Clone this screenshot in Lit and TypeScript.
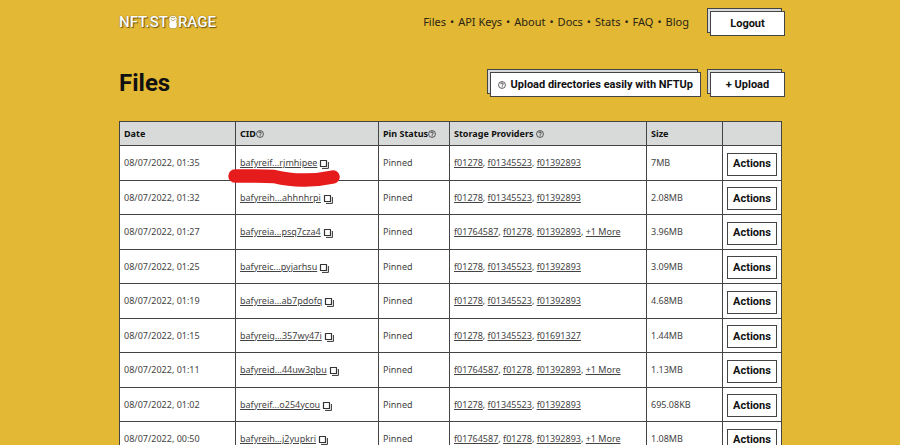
import { LitElement, html, css } from "lit";
import { customElement } from "lit/decorators.js";

interface FileRow {
  date: string;
  cid: string;
  providers: string[];
  more?: boolean;
  size: string;
  marked?: boolean;
}

const THREE = ["f01278", "f01345523", "f01392893"];
const MANY = ["f01764587", "f01278", "f01392893"];

const FILES: FileRow[] = [
  { date: "08/07/2022, 01:35", cid: "bafyreif...rjmhipee", providers: THREE, size: "7MB", marked: true },
  { date: "08/07/2022, 01:32", cid: "bafyreih...ahhnhrpi", providers: THREE, size: "2.08MB" },
  { date: "08/07/2022, 01:27", cid: "bafyreia...psq7cza4", providers: MANY, more: true, size: "3.96MB" },
  { date: "08/07/2022, 01:25", cid: "bafyreic...pyjarhsu", providers: THREE, size: "3.09MB" },
  { date: "08/07/2022, 01:19", cid: "bafyreia...ab7pdofq", providers: THREE, size: "4.68MB" },
  { date: "08/07/2022, 01:15", cid: "bafyreig...357wy47i", providers: ["f01278", "f01345523", "f01691327"], size: "1.44MB" },
  { date: "08/07/2022, 01:11", cid: "bafyreid...44uw3qbu", providers: MANY, more: true, size: "1.13MB" },
  { date: "08/07/2022, 01:02", cid: "bafyreif...o254ycou", providers: THREE, size: "695.08KB" },
  { date: "08/07/2022, 00:50", cid: "bafyreih...j2yupkri", providers: MANY, more: true, size: "1.08MB" },
];

const NAV = ["Files", "API Keys", "About", "Docs", "Stats", "FAQ", "Blog"];

const helpIcon = html`<svg class="help" viewBox="0 0 16 16" aria-hidden="true">
  <circle cx="8" cy="8" r="6.9" fill="none" stroke="currentColor" stroke-width="1.3"/>
  <path d="M5.4 6.2C5.5 4.6 6.6 3.9 8 3.9s2.6.8 2.6 2.2C10.6 7.7 8.3 7.7 8.3 9.6" fill="none" stroke="currentColor" stroke-width="1.5"/>
  <rect x="7.4" y="10.8" width="1.7" height="1.7" fill="currentColor"/>
</svg>`;

const copyIcon = html`<svg class="copy" viewBox="0 0 10 10" aria-hidden="true">
  <path d="M1.500 1.500h6v6h-6z" fill="none" stroke="#333" stroke-width="1.2" stroke-linejoin="round"/>
  <path d="M9.400 3v6.400H3" fill="none" stroke="#333" stroke-width="1"/>
</svg>`;

@customElement("app-root")
export class AppRoot extends LitElement {
  static styles = css`
    :host {
      display: block;
      box-sizing: border-box;
      min-height: 100vh;
      padding: 0 118px 0 119px;
      background: #e2b835;
      color: #111;
      font-family: "Noto Sans", "Open Sans", sans-serif;
      font-size: 9px;
      line-height: 12px;
    }
    a { color: inherit; }
    header {
      display: flex;
      align-items: center;
      justify-content: space-between;
      padding-top: 8px;
    }
    .logo {
      display: flex;
      align-items: center;
      color: #fff;
      font: 500 15px/20px Roboto, sans-serif;
      text-decoration: none;
      text-shadow: 1px 1px 1px #6b5410, 0 0 1px #6b5410;
    }
    .barrel { width: 10px; height: 14px; }
    .right { display: flex; align-items: center; gap: 18px; }
    .nav {
      display: flex;
      margin: 0;
      padding: 0;
      list-style: none;
      font-size: 11px;
      line-height: 16px;
      color: #2b2413;
    }
    .nav a { text-decoration: none; }
    .nav li + li::before { content: "•"; margin: 0 4px; }
    button {
      box-sizing: border-box;
      margin: 0;
      border: 1px solid #444;
      border-radius: 0;
      background: #fff;
      color: #111;
      font: 700 11px/14px Roboto, sans-serif;
    }
    .stacked {
      display: flex;
      align-items: center;
      justify-content: center;
      gap: 5px;
      min-width: 75px;
      height: 25px;
      padding: 0 7px;
      margin: 3px -3px 0 3px;
      box-shadow: -3px -3px 0 -1px #d8dad9, -3px -3px 0 0 #444;
    }
    .titlebar {
      display: flex;
      align-items: center;
      justify-content: space-between;
      margin: 33px 0 24px;
    }
    h1 { margin: 0; font: 700 24px/24px Roboto, sans-serif; }
    .tools { display: flex; gap: 9px; }
    .help { width: 8px; height: 8px; vertical-align: -1px; }
    table {
      width: 100%;
      table-layout: fixed;
      border-collapse: collapse;
      background: #fff;
    }
    th, td {
      box-sizing: border-box;
      border: 1px solid #444;
      padding: 0 4px;
      text-align: left;
      white-space: nowrap;
    }
    th { height: 24px; background: #d8dad9; }
    td { height: 34px; color: #444; }
    tr:nth-child(odd) td { height: 35px; }
    .date { width: 116px; }
    .cid { width: 143px; }
    .pin { width: 71px; }
    .size { width: 76px; }
    .act { width: 59px; }
    .copy { width: 10px; height: 10px; margin-left: 2px; vertical-align: -3px; }
    .cidcell { position: relative; }
    .mark {
      position: absolute;
      left: -9px;
      top: 21px;
      width: 114px;
      height: 20px;
      z-index: 1;
    }
    .actions { display: block; width: 100%; height: 23px; padding: 0; margin-top: 2px; }
  `;

  render() {
    return html`
      <header>
        <a class="logo" href="#" aria-label="NFT.Storage">NFT.ST<svg class="barrel" viewBox="0 0 9 14" aria-hidden="true">
            <path d="M2.5 .7h4L8.500 3v2.500L7.700 6.800 8.500 8v4l-2 1.500h-4L.5 12V8l.8-1.200L.5 5.500V3z" fill="#fff" stroke="#9a7920" stroke-width=".5"/>
            <path d="M2 4.200l2.500 1.600L7 4.200M2.500 2.600h4" fill="none" stroke="#a58a45" stroke-width=".8"/>
          </svg>RAGE</a>
        <div class="right">
          <nav><ul class="nav">${NAV.map((n) => html`<li><a href="#">${n}</a></li>`)}</ul></nav>
          <button class="stacked">Logout</button>
        </div>
      </header>
      <main>
        <div class="titlebar">
          <h1>Files</h1>
          <div class="tools">
            <button class="stacked">${helpIcon}<span>Upload directories easily with NFTUp</span></button>
            <button class="stacked">+ Upload</button>
          </div>
        </div>
        <table>
          <thead>
            <tr>
              <th class="date">Date</th>
              <th class="cid">CID${helpIcon}</th>
              <th class="pin">Pin Status${helpIcon}</th>
              <th>Storage Providers ${helpIcon}</th>
              <th class="size">Size</th>
              <th class="act"></th>
            </tr>
          </thead>
          <tbody>${FILES.map((f) => this.row(f))}</tbody>
        </table>
      </main>
    `;
  }

  private row(f: FileRow) {
    return html`<tr>
      <td>${f.date}</td>
      <td class="cidcell"><a href="#">${f.cid}</a>${copyIcon}${f.marked
        ? html`<svg class="mark" viewBox="0 0 114 20" aria-hidden="true">
            <path d="M8 9C24 9 37 8.500 47 9.500C58 12 66 13.500 78 13C90 13 97 12 106 10" fill="none" stroke="#e61c1c" stroke-width="13.500" stroke-linecap="round" stroke-linejoin="round"/>
          </svg>`
        : ""}</td>
      <td>Pinned</td>
      <td>${f.providers.map((p, i) => html`${i ? ", " : ""}<a href="#">${p}</a>`)}${f.more ? html`, <a href="#">+1 More</a>` : ""}</td>
      <td>${f.size}</td>
      <td><button class="actions">Actions</button></td>
    </tr>`;
  }
}
